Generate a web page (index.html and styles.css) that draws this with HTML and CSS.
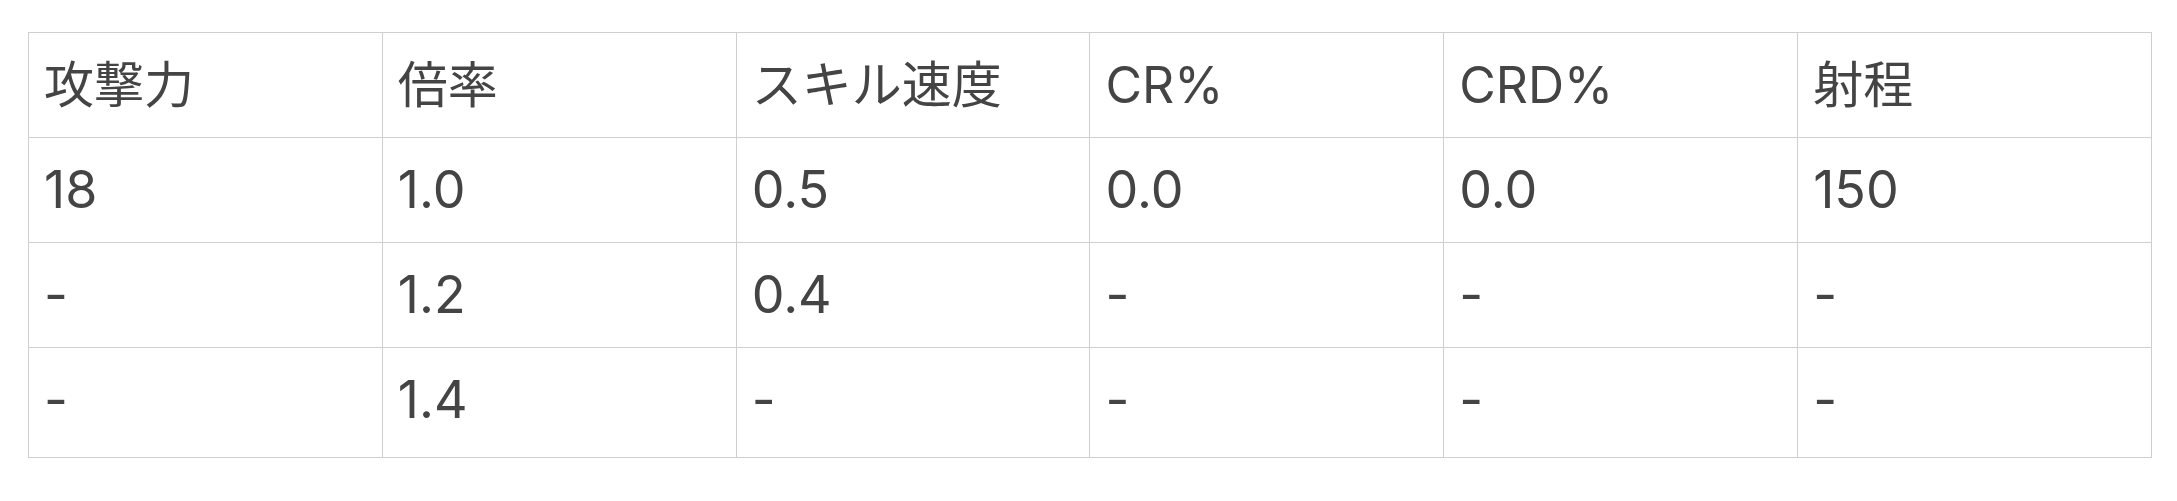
FILE: index.html
```html
<!DOCTYPE html>
<html lang="ja">
<head>
<meta charset="utf-8">
<link rel="stylesheet" href="styles.css">
</head>
<body>
<div class="page">
  <table class="stats">
    <thead>
      <tr><th>攻撃力</th><th>倍率</th><th>スキル速度</th><th>CR%</th><th>CRD%</th><th>射程</th></tr>
    </thead>
    <tbody>
      <tr><td>18</td><td>1.0</td><td>0.5</td><td>0.0</td><td>0.0</td><td>150</td></tr>
      <tr><td>-</td><td>1.2</td><td>0.4</td><td>-</td><td>-</td><td>-</td></tr>
      <tr class="last"><td>-</td><td>1.4</td><td>-</td><td>-</td><td>-</td><td>-</td></tr>
    </tbody>
  </table>
</div>
</body>
</html>
```

FILE: styles.css
```css
html, body {
  margin: 0;
  padding: 0;
  background: #ffffff;
}
.page {
  padding: 32px 0 0 28px;
}
.stats {
  width: 2124px;
  table-layout: fixed;
  border-collapse: collapse;
  font-family: Inter, "Noto Sans CJK JP", sans-serif;
  font-size: 50px;
  color: #444444;
}
.stats th,
.stats td {
  border: 1px solid #cfcfcf;
  text-align: left;
  font-weight: 400;
  padding: 0 15px;
  height: 104px;
  line-height: 60px;
  vertical-align: middle;
}
.stats td {
  font-size: 52px;
}
.stats tr.last td {
  height: 103px;
  padding-bottom: 6px;
}
```
